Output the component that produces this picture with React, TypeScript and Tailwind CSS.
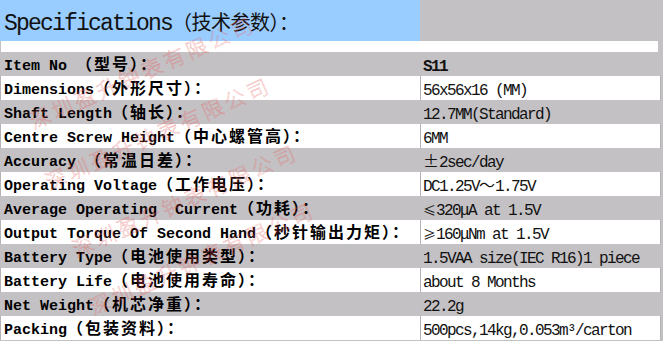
import React from "react";

const rows: [string, string, string][] = [
  ["Item No ", "（型号）：", "S11"],
  ["Dimensions", "（外形尺寸）：", "56x56x16 (MM)"],
  ["Shaft Length", "（轴长）：", "12.7MM(Standard)"],
  ["Centre Screw Height", "（中心螺管高）：", "6MM"],
  ["Accuracy ", "（常温日差）：", "±2sec/day"],
  ["Operating Voltage", "（工作电压）：", "DC1.25V～1.75V"],
  ["Average Operating  Current", "（功耗）：", "≤320μA at 1.5V"],
  ["Output Torque Of Second Hand", "（秒针输出力矩）：", "≥160μNm at 1.5V"],
  ["Battery Type", "（电池使用类型）：", "1.5VAA size(IEC R16)1 piece"],
  ["Battery Life", "（电池使用寿命）：", "about 8 Months"],
  ["Net Weight", "（机芯净重）：", "22.2g"],
  ["Packing", "（包装资料）：", "500pcs,14kg,0.053m³/carton"],
];

const marks = [
  "left-[142px] top-[72px]",
  "left-[158px] top-[133px]",
  "left-[185px] top-[200px]",
  "left-[202px] top-[258px]",
];

// wide glyphs (±, ～, ≤, ≥) come from the CJK face like in the source sheet
function Value({ text }: { text: string }) {
  const parts = text.split(/([±～≤≥])/);
  return (
    <>
      {parts.map((p, i) =>
        /^[±～≤≥]$/.test(p) ? (
          <span
            key={i}
            className={
              p === "≤" || p === "≥"
                ? "[font-family:'Noto_Sans_CJK_SC',sans-serif] text-[13px] leading-none tracking-normal"
                : "[font-family:'Noto_Sans_CJK_SC',sans-serif] text-[16px] leading-none tracking-normal"
            }
          >
            {p}
          </span>
        ) : (
          <span key={i}>{p}</span>
        )
      )}
    </>
  );
}

export default function App() {
  return (
    <div className="relative h-[341px] w-[663px] overflow-hidden bg-[#c3c1c4] text-black [font-family:'Liberation_Mono','Noto_Sans_CJK_SC',monospace]">
      <div className="flex h-[41px]">
        <div className="h-full w-[420px] overflow-hidden whitespace-pre bg-[#99ccff] pl-1 text-[23px] leading-[48px] tracking-[-1.8px] text-[#111]">
          Specifications
          <span className="text-[20px] leading-none tracking-[-0.5px] [font-family:'Noto_Sans_CJK_SC',sans-serif]">
            （技术参数）：
          </span>
        </div>
      </div>
      <div className="ml-[1px] h-[11px] w-[657px] bg-white" />

      {rows.map(([en, zh, val], i) => {
        const white = i % 2 === 1;
        return (
          <div key={i} className="flex h-6">
            <div
              className={
                white
                  ? "h-6 w-[420px] overflow-hidden whitespace-pre border-l border-[#b4b2b5] bg-white pl-[3px] text-[15px] font-bold leading-[30px]"
                  : "h-6 w-[420px] overflow-hidden whitespace-pre pl-1 text-[15px] font-bold leading-[30px]"
              }
            >
              {en}
              <span className="text-[16px] leading-none tracking-[2px] [font-family:'Noto_Sans_CJK_SC',sans-serif]">
                {zh}
              </span>
            </div>
            <div
              className={
                white
                  ? "h-6 w-[241px] overflow-hidden whitespace-pre border-x border-[#b4b2b5] bg-white pl-[2px] text-[16px] leading-[30px] tracking-[-1.6px] text-[#111]"
                  : "h-6 w-[241px] overflow-hidden whitespace-pre border-x border-[#c3c1c4] pl-[2px] text-[16px] leading-[30px] tracking-[-1.6px] text-[#111]"
              }
            >
              {i === 0 ? <span className="font-bold">{val}</span> : <Value text={val} />}
            </div>
          </div>
        );
      })}

      <div className="pointer-events-none absolute inset-0">
        {marks.map((pos, i) => (
          <div
            key={i}
            className={`absolute ${pos} -translate-x-1/2 -translate-y-1/2 -rotate-24 whitespace-nowrap text-[21px] font-light leading-none tracking-[3.5px] text-transparent [font-family:'Noto_Sans_CJK_SC',sans-serif] [-webkit-text-stroke:0.4px_rgba(232,90,90,0.6)]`}
          >
            深圳盈升钟表有限公司
          </div>
        ))}
      </div>
    </div>
  );
}
